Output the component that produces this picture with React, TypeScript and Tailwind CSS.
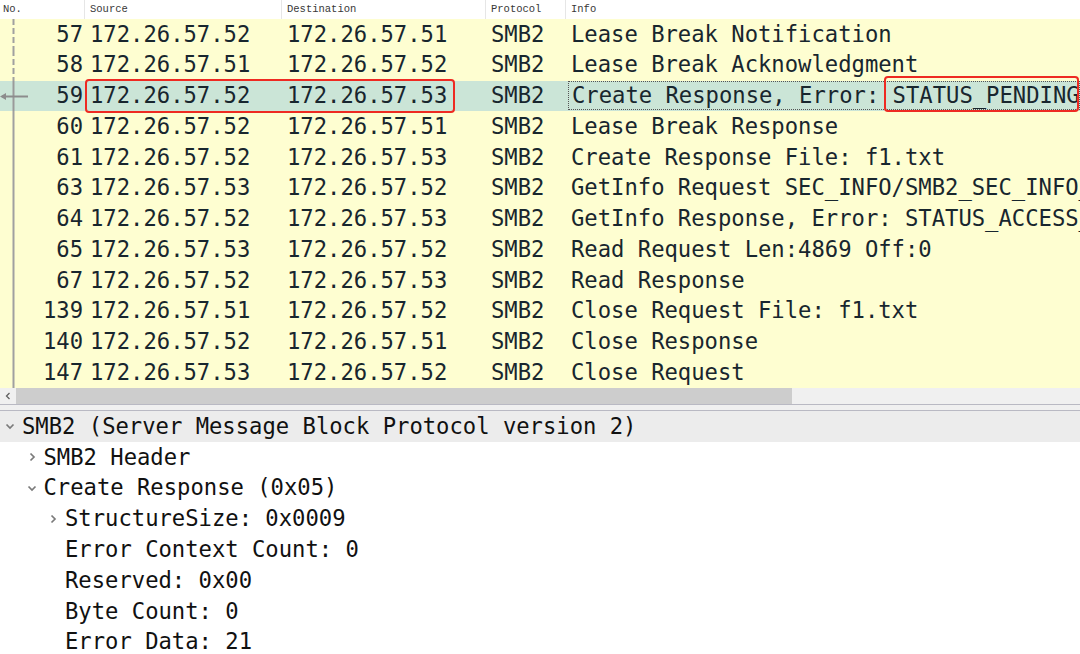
const packets = [
  { no: '57', src: '172.26.57.52', dst: '172.26.57.51', info: 'Lease Break Notification' },
  { no: '58', src: '172.26.57.51', dst: '172.26.57.52', info: 'Lease Break Acknowledgment' },
  { no: '59', src: '172.26.57.52', dst: '172.26.57.53', info: 'Create Response, Error: STATUS_PENDING' },
  { no: '60', src: '172.26.57.52', dst: '172.26.57.51', info: 'Lease Break Response' },
  { no: '61', src: '172.26.57.52', dst: '172.26.57.53', info: 'Create Response File: f1.txt' },
  { no: '63', src: '172.26.57.53', dst: '172.26.57.52', info: 'GetInfo Request SEC_INFO/SMB2_SEC_INFO_00' },
  { no: '64', src: '172.26.57.52', dst: '172.26.57.53', info: 'GetInfo Response, Error: STATUS_ACCESS_DENIED' },
  { no: '65', src: '172.26.57.53', dst: '172.26.57.52', info: 'Read Request Len:4869 Off:0' },
  { no: '67', src: '172.26.57.52', dst: '172.26.57.53', info: 'Read Response' },
  { no: '139', src: '172.26.57.51', dst: '172.26.57.52', info: 'Close Request File: f1.txt' },
  { no: '140', src: '172.26.57.52', dst: '172.26.57.51', info: 'Close Response' },
  { no: '147', src: '172.26.57.53', dst: '172.26.57.52', info: 'Close Request' },
];

// tree rows of the detail pane: indent level, expander ('open' | 'closed' | null)
const details = [
  { level: 0, exp: 'open', text: 'SMB2 (Server Message Block Protocol version 2)', hl: true },
  { level: 1, exp: 'closed', text: 'SMB2 Header' },
  { level: 1, exp: 'open', text: 'Create Response (0x05)' },
  { level: 2, exp: 'closed', text: 'StructureSize: 0x0009' },
  { level: 2, exp: null, text: 'Error Context Count: 0' },
  { level: 2, exp: null, text: 'Reserved: 0x00' },
  { level: 2, exp: null, text: 'Byte Count: 0' },
  { level: 2, exp: null, text: 'Error Data: 21' },
];

const mono = "font-['DejaVu_Sans_Mono','Liberation_Mono',monospace]";

function Chevron({ open }: { open: boolean }) {
  return (
    <svg width="10" height="10" viewBox="0 0 10 10" className="shrink-0">
      {open ? (
        <path d="M1.5 3.5 L5 7 L8.5 3.5" fill="none" stroke="#7a7a7a" strokeWidth="1.7" />
      ) : (
        <path d="M3.5 1.5 L7 5 L3.5 8.5" fill="none" stroke="#7a7a7a" strokeWidth="1.7" />
      )}
    </svg>
  );
}

function RelatedMark({ idx }: { idx: number }) {
  // dashed line above the selected packet, arrow on it, solid line below
  if (idx === 2) {
    return (
      <svg width="30" height="31" viewBox="0 0 30 31" className="absolute left-0 top-0">
        <line x1="13.5" y1="0" x2="13.5" y2="31" stroke="#9a9a9a" strokeWidth="2" />
        <line x1="2" y1="15.5" x2="28" y2="15.5" stroke="#8c8c8c" strokeWidth="2" />
        <path d="M0 15.5 L6 12 L6 19 Z" fill="#8c8c8c" />
      </svg>
    );
  }
  return (
    <svg width="30" height="31" viewBox="0 0 30 31" className="absolute left-0 top-0">
      <line
        x1="13.5"
        y1="0"
        x2="13.5"
        y2="31"
        stroke="#a0a0a0"
        strokeWidth="2"
        strokeDasharray={idx < 2 ? '6 3' : undefined}
      />
    </svg>
  );
}

export default function App() {
  return (
    <div className="relative w-[1080px] h-[654px] overflow-hidden bg-white">
      {/* column headers */}
      <div className="flex h-[19px] bg-white text-[10.5px] text-[#383838] font-['Liberation_Mono',monospace] leading-[19px]">
        <div className="w-[85px] pl-[3px] border-r border-[#e6e6e6]">No.</div>
        <div className="w-[197px] pl-[5px] border-r border-[#e6e6e6]">Source</div>
        <div className="w-[204px] pl-[5px] border-r border-[#e6e6e6]">Destination</div>
        <div className="w-[80px] pl-[5px] border-r border-[#e6e6e6]">Protocol</div>
        <div className="flex-1 pl-[5px]">Info</div>
      </div>

      {/* packet list */}
      <div className={`${mono} text-[22.2px] text-[#18262e]`}>
        {packets.map((p, i) => (
          <div
            key={p.no}
            className={`relative flex h-[30.75px] items-center whitespace-nowrap ${
              i === 2 ? 'bg-[#cbe5d7]' : 'bg-[#fefed1]'
            }`}
          >
            <RelatedMark idx={i} />
            <div className="relative w-[85px] pr-[2px] text-right">{p.no}</div>
            <div className="w-[197px] pl-[5px]">{p.src}</div>
            <div className="w-[204px] pl-[5px]">{p.dst}</div>
            <div className="w-[80px] pl-[5px]">SMB2</div>
            <div
              className={`flex-1 overflow-hidden pl-[3px] ml-[2px] ${
                i === 2 ? 'border border-dotted border-[#555] h-[29px] flex items-center' : ''
              }`}
            >
              {p.info}
            </div>
          </div>
        ))}
      </div>

      {/* horizontal scrollbar */}
      <div className="flex h-[16px] bg-[#f0f0f0] items-center">
        <div className="w-[16px] flex justify-center">
          <svg width="8" height="8" viewBox="0 0 8 8">
            <path d="M5.5 1 L2.5 4 L5.5 7" fill="none" stroke="#606060" strokeWidth="1.3" />
          </svg>
        </div>
        <div className="w-[776px] h-full bg-[#cdcdcd]" />
      </div>

      {/* splitter */}
      <div className="h-[7px] bg-[#f0f0f0] border-t border-b border-[#b9b9c3]" />

      {/* packet details */}
      <div className={`${mono} text-[22.2px] text-[#111]`}>
        {details.map((d, i) => (
          <div
            key={i}
            className={`flex h-[30.8px] items-center whitespace-nowrap ${d.hl ? 'bg-[#ececec]' : ''}`}
            style={{ paddingLeft: 3 + d.level * 21.5 }}
          >
            <div className="w-[19px] flex justify-start pl-[2px]">
              {d.exp && <Chevron open={d.exp === 'open'} />}
            </div>
            <span>{d.text}</span>
          </div>
        ))}
      </div>

      {/* red annotation boxes */}
      <div className="absolute left-[85px] top-[79px] w-[370px] h-[34px] border-2 border-[#ee2a22] rounded-[4px]" />
      <div className="absolute left-[884px] top-[76px] w-[195px] h-[36px] border-2 border-[#ee2a22] rounded-[4px]" />
    </div>
  );
}
